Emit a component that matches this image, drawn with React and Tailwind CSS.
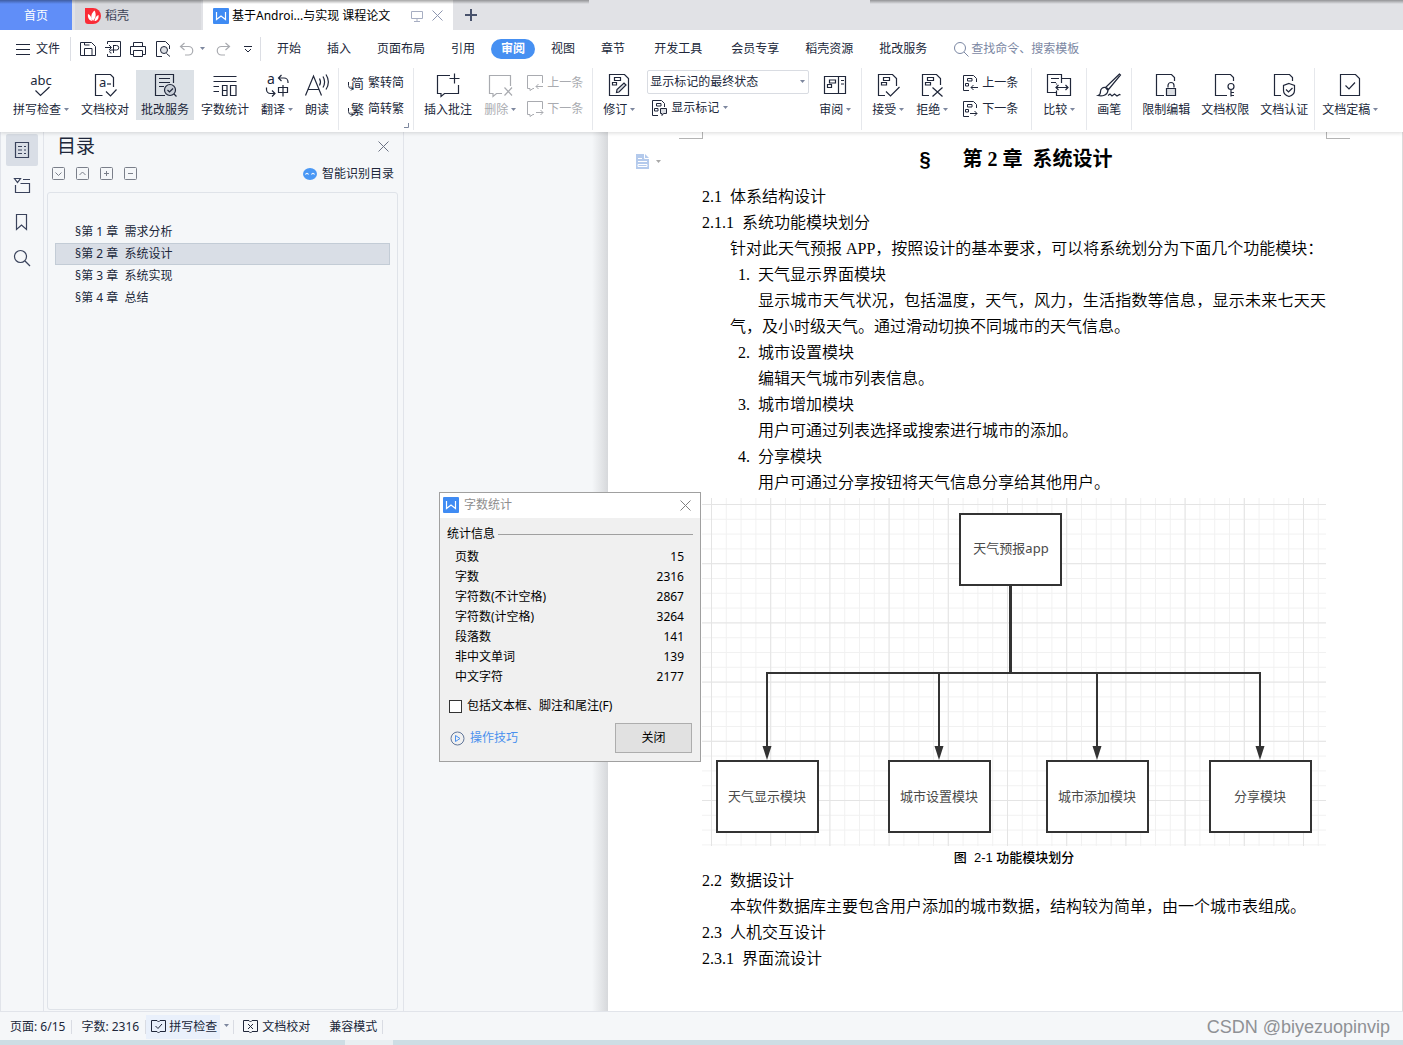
const uiFont = "font-['Noto_Sans','Noto_Sans_CJK_SC',sans-serif]";
const docFont = "font-['Liberation_Serif','Noto_Sans_CJK_SC',serif]";

function Svg({ w = 24, h = 24, children, className = "" }) {
  return (
    <svg
      width={w}
      height={h}
      viewBox={`0 0 ${w} ${h}`}
      fill="none"
      stroke="currentColor"
      aria-hidden="true"
      className={`shrink-0 overflow-visible ${className}`}
    >
      {children}
    </svg>
  );
}

function Caret({ className = "mb-[2px] text-[#7d879e]" }) {
  return (
    <Svg w={5} h={3} className={className}>
      <path d="M0 0h5L2.5 3z" fill="currentColor" stroke="none" />
    </Svg>
  );
}

function WpsLogo() {
  return (
    <Svg w={16} h={16}>
      <rect width="16" height="16" rx="1" fill="#3f8bf3" stroke="none" />
      <path d="M3.5 4v7.5L8 8l4.500 3.500V4" stroke="#fff" strokeWidth="1.2" />
    </Svg>
  );
}

/* Sheet with the two tracked-change marks, shared by the revision icons */
const marks = <path d="M7.5 4.5h6v3h-6zM5.5 9.5h5v2.500h-5z" strokeWidth="1.2" />;

const icons = {
  spell: (
    <Svg>
      <text x="12" y="12" textAnchor="middle" fontSize="13" fill="currentColor" stroke="none">abc</text>
      <path d="M6.5 17.5l5 5 9-8.5" strokeWidth="1.2" />
    </Svg>
  ),
  proof: (
    <Svg>
      <path d="M9.5 22.5h-7v-21h15l3 3v9.5M13 18.5l4.5 4.5 6-6.5" strokeWidth="1.2" />
      <text x="6" y="14" fontSize="13" fill="currentColor" stroke="none">a</text>
      <path d="M14 11h4" strokeWidth="1.2" />
    </Svg>
  ),
  correct: (
    <Svg>
      <path d="M12 22.5H2.5v-21h18V10M6 5.5h11M6 9.5h11M6 13.5h5" strokeWidth="1.2" />
      <circle cx="17" cy="17" r="5.5" fill="#c8ced6" strokeWidth="1.2" />
      <path d="M14.5 17l2 2 3.5-3.5M21 21l2.5 2.5" strokeWidth="1.2" />
    </Svg>
  ),
  count: (
    <Svg>
      <path d="M.5 3.5h23M.5 8.5h23M.5 13.5H6M.5 18.5H6M9.5 12.5H14v10H9.5zM9.5 17.5H14M17.5 12.5H23v10h-5.5z" strokeWidth="1.2" />
    </Svg>
  ),
  translate: (
    <Svg>
      <text x="2" y="11" fontSize="14" fill="currentColor" stroke="none">a</text>
      <path d="M16.5 2l-3 3 3 3M13.5 5H19a4 4 0 0 1 4 4v1M1.5 14.5v2a4 4 0 0 0 4 4h4M7 17.5l3 3-3 3M13.5 14.5h9v5h-9zM18 12v11.5" strokeWidth="1.2" />
    </Svg>
  ),
  read: (
    <Svg>
      <path d="M.5 22.5L8.5 3l8 19.5M3 16.5h11M14.5 5.5a7 7 0 0 1 0 7M18 3.5a11 11 0 0 1 0 11M21 1.5a14 14 0 0 1 0 15" strokeWidth="1.2" />
    </Svg>
  ),
  addNote: (
    <Svg>
      <path d="M14 2.5H1.5v18H5v3l3.5-3h14V12M18.5.5v10M13.5 5.5h10" strokeWidth="1.2" />
    </Svg>
  ),
  delNote: (
    <Svg>
      <path d="M22.5 13V2.5h-21v18H5v3l3.5-3H14M16.5 14.5l7.5 8M24 14.5l-7.5 8" strokeWidth="1.2" />
    </Svg>
  ),
  revise: (
    <Svg>
      <path d="M2.5 1.5h15l4 4v17h-19z" strokeWidth="1.2" />
      <path d="M9.5 19.5l.5-3 7-6.500 2 2-7 7z" fill="#dcdfe4" strokeWidth="1.2" />
      <path d="M7.5 4.5h6v3h-6zM5.5 9.5h4V12h-4z" strokeWidth="1.2" />
    </Svg>
  ),
  pane: (
    <Svg>
      <path d="M1.5 3.5h21v17h-21zM15.5 3.5v17M18 7.5h3M18 11h3" strokeWidth="1.2" />
      <path d="M6.5 7h6v3h-6zM4.5 11.5h4v3h-4z" strokeWidth="1.2" />
    </Svg>
  ),
  accept: (
    <Svg>
      <path d="M9 22.5H2.5v-21h14l4 4V13M10 18.5l4.5 4.5 9-9" strokeWidth="1.2" />
      {marks}
    </Svg>
  ),
  reject: (
    <Svg>
      <path d="M9 22.5H2.5v-21h14l4 4V12M12.5 14.5l10 9M22.5 14.5l-10 9" strokeWidth="1.2" />
      {marks}
    </Svg>
  ),
  compare: (
    <Svg>
      <path d="M14.5 10V1.5H.5v18h9M4 5.5h8M4 9.5h5M14.500 5.5h9v17h-14v-5M9.5 10.500v1M9 14.5h12M11.5 12L9 14.5l2.5 2.5M18.5 12l2.5 2.5-2.5 2.5" strokeWidth="1.2" />
    </Svg>
  ),
  brush: (
    <Svg>
      <path d="M22.5 1L9 14l2.5 2.5L23.500 2zM8.5 14.5c-3-.5-5 1.5-5 4 0 2-1 3.5-2.500 4 4 1 9.500 0 10-5z" strokeWidth="1.2" />
      <path d="M11 22.500l2-1.500 2 2 2.500-2 2.500 2 2.500-1.500 1 .5" strokeWidth="1.2" />
    </Svg>
  ),
  restrict: (
    <Svg>
      <path d="M10 22.5H2.5v-21h15l3 3V8M14 14.5v-2a3 3 0 0 1 6 0v2" strokeWidth="1.2" />
      <path d="M12.5 15.5h9v7h-9z" fill="#dcdfe4" strokeWidth="1.2" />
    </Svg>
  ),
  permission: (
    <Svg>
      <path d="M14 22.5H2.5v-21h15l3 3V8M18 16.5v7M18 19.5h3M18 22.5h3" strokeWidth="1.2" />
      <circle cx="18" cy="13.5" r="3" strokeWidth="1.2" />
    </Svg>
  ),
  certify: (
    <Svg>
      <path d="M9 22.5H2.5v-21h15l3 3V8M17 10.5l5.5 2v5c0 3-2.500 5-5.500 6-3-1-5.500-3-5.500-6v-5zM14 16.5l2.5 2.5 4-4" strokeWidth="1.2" />
    </Svg>
  ),
  finalize: (
    <Svg>
      <path d="M2.5 1.5h15l4 4v17h-19zM7.5 12.5l3.5 3.5 6-6.5" strokeWidth="1.2" />
    </Svg>
  ),
  toSimple: (
    <Svg w={16} h={16}>
      <text x="3" y="13" fontSize="13" fill="currentColor" stroke="none">简</text>
      <path d="M.5 7v3.5a3 3 0 0 0 3 3H5M3 11.5l2 2-2 2" />
    </Svg>
  ),
  toTrad: (
    <Svg w={16} h={16}>
      <text x="3" y="13" fontSize="13" fill="currentColor" stroke="none">繁</text>
      <path d="M.5 7v3.5a3 3 0 0 0 3 3H5M3 11.5l2 2-2 2" />
    </Svg>
  ),
  prevNote: (
    <Svg w={16} h={16}>
      <path d="M15.5 8V.5H.5v13H3v2l3-2h1M16 11.5H9M11.5 9L9 11.5l2.5 2.5" />
    </Svg>
  ),
  nextNote: (
    <Svg w={16} h={16}>
      <path d="M15.5 8V.5H.5v13H3v2l3-2h1M9 11.5h7M13.5 9l2.5 2.5-2.5 2.5" />
    </Svg>
  ),
  showMarks: (
    <Svg w={16} h={16}>
      <path d="M7 15.5H1.5V.5h9l3 3V7M5.5 3.5H10V6H5.5zM3.5 8.5H7V11H3.5z" />
      <path d="M9.5 8.5h6v5h-3l-1.5 2v-2H9.5z" fill="#dcdfe4" />
    </Svg>
  ),
  prevRev: (
    <Svg w={16} h={16}>
      <path d="M7 15.5H1.5V.5h10l3 3V7M5.5 3.5H10V6H5.5zM3.5 8.5h3V11h-3zM16 12.5H9M11.5 10L9 12.5l2.5 2.5" />
    </Svg>
  ),
  nextRev: (
    <Svg w={16} h={16}>
      <path d="M7 15.5H1.5V.5h10l3 3V7M5.5 3.5H10V6H5.5zM3.5 8.5h3V11h-3zM8 12.5h7M12.5 10l2.5 2.5-2.5 2.5" />
    </Svg>
  ),
};

function BigButton({ icon, label, caret, active, disabled }) {
  return (
    <button
      type="button"
      disabled={disabled}
      className={`flex h-[50px] shrink-0 flex-col items-center px-[5px] pt-[3px] ${
        active ? "bg-[#dce1e6]" : ""
      } ${disabled ? "text-[#a9abb0]" : "text-[#20273a]"}`}
    >
      {icons[icon]}
      <span className="mt-1 flex items-center gap-[3px] leading-[18px] whitespace-nowrap">
        {label}
        {caret && <Caret />}
      </span>
    </button>
  );
}

function SmallButton({ icon, label, caret, disabled }) {
  return (
    <button
      type="button"
      disabled={disabled}
      className={`flex h-[26px] shrink-0 items-center gap-1 px-1 whitespace-nowrap ${
        disabled ? "text-[#a9abb0]" : "text-[#20273a]"
      }`}
    >
      {icons[icon]}
      {label}
      {caret && <Caret />}
    </button>
  );
}

function Group({ children, className = "gap-[2px] px-[5px]" }) {
  return (
    <div className={`flex h-[62px] shrink-0 items-start border-r border-[#e6e8ec] pt-[2px] ${className}`}>
      {children}
    </div>
  );
}

function TitleTabs() {
  return (
    <div className="relative flex h-[30px] bg-[#e1e2e6]">
      <button type="button" className="w-[72px] bg-[#608ef8] pt-px text-white">首页</button>
      <button type="button" className="ml-[3px] flex w-[126px] items-center gap-1 bg-[#d8d9dd] pt-px pl-[10px] text-[#3c4256]">
        <Svg w={16} h={16}>
          <path d="M0 0h8a8 8 0 1 1 0 16H3a3 3 0 0 1-3-3z" fill="#fa2c37" stroke="none" />
          <path d="M8 13C5 9 6.500 5 9.500 2.500 11.500 6 11 10 8 13zM7 13C3.500 12 2.500 9 3 6c2.500 1 4 4 4 7zM9.500 13c3 0 4.500-2.500 4-6-2 .5-3.500 3-4 6z" fill="#fff" stroke="none" />
        </Svg>
        稻壳
      </button>
      <div className="ml-[2px] flex w-[250px] items-center bg-white pt-px pl-[10px] text-black">
        <WpsLogo />
        <span className="ml-[3px] grow whitespace-nowrap">基于Androi...与实现 课程论文</span>
        <Svg w={12} h={12} className="mr-[9px] text-[#a7aec2]">
          <path d="M.5 1.5h11v7H.5zM6 8.5V11M3 11.5h6" />
        </Svg>
        <button type="button" aria-label="关闭标签" className="mr-[10px]">
          <Svg w={11} h={11} className="text-[#8d96b0]">
            <path d="M.5.5l10 10M10.5.5l-10 10" />
          </Svg>
        </button>
      </div>
      <button type="button" aria-label="新建" className="ml-3">
        <Svg w={12} h={12} className="text-[#48526c]">
          <path d="M6 0v12M0 6h12" strokeWidth="2" />
        </Svg>
      </button>
      <div className="pointer-events-none absolute inset-x-0 top-0 flex h-1 justify-between">
        <div className="w-[42%] bg-gradient-to-b from-black/35 to-transparent" />
        <div className="w-[38%] bg-gradient-to-b from-black/35 to-transparent" />
      </div>
    </div>
  );
}

const menuLeft = ["开始", "插入", "页面布局", "引用"];
const menuRight = ["视图", "章节", "开发工具", "会员专享", "稻壳资源", "批改服务"];

function MenuBar() {
  return (
    <div className="flex h-[37px] items-center pt-px text-[#20273a]">
      <button type="button" className="ml-4 flex items-center gap-[6px]">
        <Svg w={14} h={11}>
          <path d="M0 .5h14M0 5.5h14M0 10.5h14" />
        </Svg>
        文件
      </button>
      <div className="ml-[10px] h-6 w-px bg-[#dcdee4]" />
      <div className="ml-[9px] flex items-center gap-[9px]">
        <button type="button" aria-label="保存">
          <Svg w={16} h={16}>
            <path d="M.5 1.5h11l4 4v9H.5zM4.5 14.500V7.5H12v7M4.5 1.5V4h5" />
          </Svg>
        </button>
        <button type="button" aria-label="输出为PDF">
          <Svg w={16} h={16}>
            <path d="M2.5 3V.5h13v15h-13V13M0 6.5h6M4 4l2.500 2.5L4 9M8.5 4v8M8.5 4.5h3a2 2 0 0 1 0 4.500h-6a2 2 0 0 0 0 3h1" />
          </Svg>
        </button>
        <button type="button" aria-label="打印">
          <Svg w={16} h={16}>
            <path d="M3.5 5.500v-4h9v4M3 13.5H.5v-8h15v8H13M3.5 9.5h9v6h-9z" />
          </Svg>
        </button>
        <button type="button" aria-label="打印预览">
          <Svg w={16} h={16}>
            <path d="M7 15.5H1.5V.5h9l4 4V8M11.5 12.5l3.500 3" />
            <circle cx="9" cy="9" r="3.5" fill="#dcdfe4" />
          </Svg>
        </button>
      </div>
      <button type="button" aria-label="撤销" className="ml-[9px] flex items-center gap-[6px] text-[#a9abb0]">
        <Svg w={14} h={14}>
          <path d="M4.5 1l-4 3.5 4 3.5M.5 4.5h8a4 4 0 0 1 0 8.500H5" strokeWidth="1.2" />
        </Svg>
        <Caret />
      </button>
      <button type="button" aria-label="恢复" className="ml-[11px] text-[#a9abb0]">
        <Svg w={14} h={14}>
          <path d="M9.5 1l4 3.5-4 3.5M13.5 4.5h-8a4 4 0 0 0 0 8.500H9" strokeWidth="1.2" />
        </Svg>
      </button>
      <button type="button" aria-label="自定义" className="ml-[14px]">
        <Svg w={8} h={7}>
          <path d="M0 .5h8M1 3l3 3 3-3" />
        </Svg>
      </button>
      <div className="ml-2 h-6 w-px bg-[#dcdee4]" />
      <nav className="ml-[3px] flex items-center whitespace-nowrap">
        {menuLeft.map((m) => (
          <button key={m} type="button" className="px-[13px]">{m}</button>
        ))}
        <button type="button" className="mx-[3px] h-5 rounded-full bg-[#4690f2] px-[10px] font-bold text-white">审阅</button>
        {menuRight.map((m) => (
          <button key={m} type="button" className={m === "开发工具" ? "px-4" : "px-[13px]"}>{m}</button>
        ))}
      </nav>
      <label className="ml-[14px] flex items-center gap-[2px] text-[#7b87a3]">
        <Svg w={15} h={15}>
          <circle cx="6" cy="6" r="5.5" />
          <path d="M10 10l4.5 4.5" />
        </Svg>
        <input
          type="text"
          aria-label="查找命令"
          placeholder="查找命令、搜索模板"
          className="w-32 bg-transparent outline-none placeholder:text-[#7b87a3]"
        />
      </label>
    </div>
  );
}

function Ribbon() {
  return (
    <div className="flex h-[65px] overflow-hidden pt-px pl-[3px]">
      <Group className="gap-[2px] pr-1 pl-[5px]">
        <BigButton icon="spell" label="拼写检查" caret />
        <BigButton icon="proof" label="文档校对" />
        <BigButton icon="correct" label="批改服务" active />
        <BigButton icon="count" label="字数统计" />
        <BigButton icon="translate" label="翻译" caret />
        <BigButton icon="read" label="朗读" />
      </Group>
      <Group className="relative px-[5px]">
        <div>
          <SmallButton icon="toSimple" label="繁转简" />
          <SmallButton icon="toTrad" label="简转繁" />
        </div>
        <Svg w={5} h={5} className="absolute right-1 bottom-[2px] text-[#7d879e]">
          <path d="M4.5 0v4.500H0" />
        </Svg>
      </Group>
      <Group>
        <BigButton icon="addNote" label="插入批注" />
        <BigButton icon="delNote" label="删除" caret disabled />
        <div>
          <SmallButton icon="prevNote" label="上一条" disabled />
          <SmallButton icon="nextNote" label="下一条" disabled />
        </div>
      </Group>
      <Group>
        <BigButton icon="revise" label="修订" caret />
        <div className="mr-[3px] ml-[5px] w-[162px]">
          <div className="relative">
            <select
              aria-label="显示状态"
              className="h-6 w-full appearance-none rounded-[2px] border border-[#d9dce2] bg-white pl-[2px] text-[#20273a]"
            >
              <option>显示标记的最终状态</option>
            </select>
            <div className="pointer-events-none absolute inset-y-0 right-1 flex items-center">
              <Caret />
            </div>
          </div>
          <div className="pt-px">
            <SmallButton icon="showMarks" label="显示标记" caret />
          </div>
        </div>
        <BigButton icon="pane" label="审阅" caret />
      </Group>
      <Group className="gap-[2px] pr-[6px] pl-[5px]">
        <BigButton icon="accept" label="接受" caret />
        <BigButton icon="reject" label="拒绝" caret />
        <div className="mx-[3px]">
          <SmallButton icon="prevRev" label="上一条" />
          <SmallButton icon="nextRev" label="下一条" />
        </div>
      </Group>
      <Group className="px-[6px]">
        <BigButton icon="compare" label="比较" caret />
      </Group>
      <Group>
        <BigButton icon="brush" label="画笔" />
      </Group>
      <Group className="gap-px pr-px pl-[5px]">
        <BigButton icon="restrict" label="限制编辑" />
        <BigButton icon="permission" label="文档权限" />
        <BigButton icon="certify" label="文档认证" />
      </Group>
      <div className="pt-[2px] pl-[2px]">
        <BigButton icon="finalize" label="文档定稿" caret />
      </div>
    </div>
  );
}

function IconRail() {
  const button = "flex size-8 items-center justify-center rounded-[2px]";
  return (
    <div className="flex w-[44px] shrink-0 flex-col gap-1 border-x border-[#e1e4ea] pt-[2px] pl-[5px] text-[#3a435c]">
      <button type="button" aria-label="目录" className={`${button} bg-[#d9dee6]`}>
        <Svg w={16} h={18}>
          <path d="M1.5 1.5h13v15h-13zM4 5.5h4M10 5.5h2M4 9h4M10 9h2M4 12.5h4M10 12.5h2" strokeWidth="1.2" />
        </Svg>
      </button>
      <button type="button" aria-label="章节" className={button}>
        <Svg w={16} h={16}>
          <path d="M.5.5h6l-3 4zM9 1.5h7M1.5 7v7.5h14v-9h-9" strokeWidth="1.2" />
        </Svg>
      </button>
      <button type="button" aria-label="书签" className={button}>
        <Svg w={12} h={18}>
          <path d="M.5 1.5h10v15l-5-4.500-5 4.500z" strokeWidth="1.2" />
        </Svg>
      </button>
      <button type="button" aria-label="查找" className={button}>
        <Svg w={16} h={16}>
          <circle cx="6.5" cy="6.5" r="6" strokeWidth="1.2" />
          <path d="M11 11l5 5" strokeWidth="1.2" />
        </Svg>
      </button>
    </div>
  );
}

const outline = ["§第 1 章  需求分析", "§第 2 章  系统设计", "§第 3 章  系统实现", "§第 4 章  总结"];
const outlineTools = [
  { label: "展开", d: "M3.500 5.500l3 3 3-3" },
  { label: "收起", d: "M3.500 8l3-3 3 3" },
  { label: "增加级别", d: "M6.5 4v5M4 6.5h5" },
  { label: "减少级别", d: "M4 6.5h5" },
];

function OutlinePanel() {
  return (
    <aside className="flex w-[360px] shrink-0 flex-col border-r border-[#e1e4ea] text-[#20273a]">
      <div className="flex h-[29px] items-center justify-between pr-[14px] pl-[13px]">
        <h2 className="text-[19px]">目录</h2>
        <button type="button" aria-label="关闭目录">
          <Svg w={11} h={11} className="text-[#6b7284]">
            <path d="M.5.5l10 10M10.5.5l-10 10" />
          </Svg>
        </button>
      </div>
      <div className="flex h-[25px] items-center gap-[11px] pr-[9px] pl-2">
        {outlineTools.map((t) => (
          <button key={t.label} type="button" aria-label={t.label}>
            <Svg w={13} h={13} className="text-[#7a7f8a]">
              <rect x=".5" y=".5" width="12" height="12" rx="1" />
              <path d={t.d} />
            </Svg>
          </button>
        ))}
        <button type="button" className="ml-auto flex items-center gap-[5px] pt-px">
          <Svg w={14} h={14}>
            <ellipse cx="7" cy="7" rx="7" ry="6" fill="#4a98f5" stroke="none" />
            <path d="M2.5 7.5q1.500-2.500 3 0M8.5 7.5q1.500-2.500 3 0" stroke="#fff" strokeWidth="1.2" />
          </Svg>
          智能识别目录
        </button>
      </div>
      <ul className="mt-[6px] mr-[5px] mb-px ml-[3px] grow rounded-[3px] border border-[#dfe3e9] px-[7px] pt-7">
        {outline.map((item, i) => (
          <li key={item}>
            <a
              href="#outline"
              className={`block border pl-[19px] leading-5 whitespace-pre ${
                i === 1 ? "border-[#c3ccd6] bg-[#d9dee6]" : "border-transparent"
              }`}
            >
              {item}
            </a>
          </li>
        ))}
      </ul>
    </aside>
  );
}

const modules = [
  { x: 65, label: "天气显示模块" },
  { x: 237, label: "城市设置模块" },
  { x: 395, label: "城市添加模块" },
  { x: 558, label: "分享模块" },
];

function ModuleDiagram() {
  return (
    <svg viewBox="0 0 624 348" role="img" aria-label="功能模块划分" className={`mt-[2px] block w-full font-normal ${uiFont}`}>
      <defs>
        <pattern id="minor" x="9" y="6" width="14.8" height="14.8" patternUnits="userSpaceOnUse">
          <path d="M0 .5h14.8M.5 0v14.8" stroke="#f1f1f1" fill="none" />
        </pattern>
        <pattern id="major" x="9" y="6" width="59.2" height="59.2" patternUnits="userSpaceOnUse">
          <path d="M0 .5h59.2M.5 0v59.2" stroke="#e4e4e4" fill="none" />
        </pattern>
      </defs>
      <rect width="624" height="348" fill="url(#minor)" />
      <rect width="624" height="348" fill="url(#major)" />
      <g fill="none" stroke="#333" strokeWidth="2">
        <path d="M308.5 87v88" strokeWidth="3" />
        <path d="M65 250V175h493v75M237 175v75M395 175v75" />
      </g>
      <g textAnchor="middle" fontSize="13" fill="#4a4a4a">
        <rect x="258" y="16" width="101" height="71" fill="#fff" stroke="#333" strokeWidth="2" />
        <text x="309" y="55">天气预报app</text>
        {modules.map((m) => (
          <g key={m.label}>
            <path d={`M${m.x - 4.5} 248h9l-4.5 14z`} fill="#333" />
            <rect x={m.x - 50} y="263" width="101" height="71" fill="#fff" stroke="#333" strokeWidth="2" />
            <text x={m.x} y="303">{m.label}</text>
          </g>
        ))}
      </g>
    </svg>
  );
}

function Line({ children, className = "" }) {
  return <p className={`whitespace-pre ${className}`}>{children}</p>;
}

function DocumentPage() {
  return (
    <article className={`relative grow border-r border-[#dcdcdc] bg-white pr-[76px] pl-[94px] text-[16px] leading-[26px] font-[350] text-black ${docFont}`}>
      <div className="absolute top-0 left-[71px] h-[7px] w-6 border-r border-b border-[#b4b4b4]" />
      <div className="absolute top-0 right-[52px] h-[7px] w-6 border-b border-l border-[#b4b4b4]" />
      <button type="button" aria-label="段落布局" className="absolute top-[22px] left-7 flex items-center gap-[7px]">
        <Svg w={13} h={15}>
          <path d="M0 0h9l4 4v11H0z" fill="#b4caec" stroke="none" />
          <path d="M2 4.5h4M2 7.5h9M2 10.5h9v2H2zM8.5 0v4.500H13" stroke="#fff" />
        </Svg>
        <Caret className="text-[#a8a8a8]" />
      </button>
      <h1 className="flex h-[52px] items-center justify-center gap-8 pt-[2px] pl-1 text-[20px] font-bold">
        <span className="font-['Liberation_Sans',sans-serif]">§</span>
        <span className="whitespace-pre">第 2 章  系统设计</span>
      </h1>
      <Line>2.1  体系结构设计</Line>
      <Line>2.1.1  系统功能模块划分</Line>
      <p className="-mr-4 pl-7">针对此天气预报 APP，按照设计的基本要求，可以将系统划分为下面几个功能模块：</p>
      <Line className="pl-9">1.  天气显示界面模块</Line>
      <p className="pl-7 indent-7 text-justify">
        显示城市天气状况，包括温度，天气，风力，生活指数等信息，显示未来七天天气，及小时级天气。通过滑动切换不同城市的天气信息。
      </p>
      <Line className="pl-9">2.  城市设置模块</Line>
      <Line className="pl-14">编辑天气城市列表信息。</Line>
      <Line className="pl-9">3.  城市增加模块</Line>
      <Line className="pl-14">用户可通过列表选择或搜索进行城市的添加。</Line>
      <Line className="pl-9">4.  分享模块</Line>
      <Line className="pl-14">用户可通过分享按钮将天气信息分享给其他用户。</Line>
      <ModuleDiagram />
      <p className="pt-px text-center font-['Liberation_Sans','Noto_Sans_CJK_SC',sans-serif] text-[13px] leading-[21px] font-medium whitespace-pre">
        图  2-1 功能模块划分
      </p>
      <Line>2.2  数据设计</Line>
      <Line className="pl-7">本软件数据库主要包含用户添加的城市数据，结构较为简单，由一个城市表组成。</Line>
      <Line>2.3  人机交互设计</Line>
      <Line>2.3.1  界面流设计</Line>
    </article>
  );
}

const stats = [
  ["页数", 15],
  ["字数", 2316],
  ["字符数(不计空格)", 2867],
  ["字符数(计空格)", 3264],
  ["段落数", 141],
  ["非中文单词", 139],
  ["中文字符", 2177],
];

function WordCountDialog() {
  return (
    <div
      role="dialog"
      aria-label="字数统计"
      className="absolute top-[492px] left-[439px] z-20 w-[262px] border border-[#a0a0a0] bg-[#f0f0f0] text-black"
    >
      <div className="flex h-[25px] items-center bg-white pr-[9px] pb-px pl-[3px] text-[#8e8e8e]">
        <WpsLogo />
        <span className="ml-[5px] grow">字数统计</span>
        <button type="button" aria-label="关闭窗口">
          <Svg w={11} h={11} className="text-[#808080]">
            <path d="M.5.5l10 10M10.5.5l-10 10" />
          </Svg>
        </button>
      </div>
      <div className="flex items-center gap-[3px] pt-[6px] pr-[7px] pl-[7px] leading-5">
        统计信息
        <div className="h-px grow bg-[#a0a0a0]" />
      </div>
      <table className="mt-[3px] w-full leading-5">
        <tbody>
          {stats.map(([name, value]) => (
            <tr key={name}>
              <th scope="row" className="p-0 pl-[15px] text-left font-normal">{name}</th>
              <td className="p-0 pr-4 text-right">{value}</td>
            </tr>
          ))}
        </tbody>
      </table>
      <label className="mt-[9px] flex h-5 items-center gap-[5px] pl-[9px]">
        <input type="checkbox" className="size-[13px] appearance-none border border-[#333] bg-white" />
        包括文本框、脚注和尾注(F)
      </label>
      <div className="mt-[7px] mb-2 flex items-center justify-between pr-2 pl-[10px]">
        <a href="#tips" className="flex items-center gap-[5px] text-[#4a90ee]">
          <Svg w={15} h={15}>
            <circle cx="7.5" cy="7.5" r="6.5" stroke="#62779a" />
            <path d="M5.5 4.5v6l4.500-3z" />
          </Svg>
          操作技巧
        </a>
        <button type="button" className="h-[30px] w-[77px] border border-[#adadad] bg-[#e1e1e1]">关闭</button>
      </div>
    </div>
  );
}

function StatusBar() {
  const divider = <div className="h-[14px] w-px bg-[#d9dce3]" />;
  return (
    <footer className="flex h-[29px] shrink-0 items-center border-t border-[#e1e4ea] pt-px pl-[10px] whitespace-nowrap text-[#20273a]">
      <span className="pr-[6px]">页面: 6/15</span>
      {divider}
      <span className="pr-[6px] pl-[9px]">字数: 2316</span>
      {divider}
      <button type="button" className="flex h-6 items-center gap-[3px] bg-[#e9f0fb] pr-[3px] pl-[5px]">
        <Svg w={15} h={15}>
          <path d="M6 1.5H.5v11H6L7.5 14 9 12.5h5.5v-11H9L7.5 3zM4.500 7l2.500 2.500L11 5" />
        </Svg>
        拼写检查
      </button>
      <button type="button" aria-label="拼写检查选项" className="px-[4px]">
        <Caret />
      </button>
      {divider}
      <button type="button" className="flex items-center gap-1 pr-[10px] pl-[9px]">
        <Svg w={15} h={15}>
          <path d="M6 1.5H.5v11H6L7.5 14 9 12.5h5.5v-11H9L7.5 3zM5 5l5 5M10 5l-5 5" />
        </Svg>
        文档校对
      </button>
      <span className="pr-[5px] pl-[9px]">兼容模式</span>
      {divider}
      <span className="ml-auto pr-[13px] font-['Liberation_Sans',sans-serif] text-[18px] leading-6 text-[#8f9195]">
        CSDN @biyezuopinvip
      </span>
    </footer>
  );
}

export default function App() {
  return (
    <div className={`relative flex min-h-screen flex-col bg-[#f5f7f9] text-[12px] ${uiFont}`}>
      <header className="relative z-10 bg-white shadow-[0_1px_4px_rgba(0,0,0,0.15)]">
        <TitleTabs />
        <MenuBar />
        <Ribbon />
      </header>
      <main className="flex grow">
        <IconRail />
        <OutlinePanel />
        <div className="flex w-[204px] shrink-0 justify-end">
          <div className="w-4 bg-gradient-to-r from-transparent to-[#d6d8db]" />
        </div>
        <DocumentPage />
      </main>
      <StatusBar />
      <div className="h-[5px] shrink-0 bg-[#cddde4]">
        <div className="ml-[345px] h-full w-12 bg-[#e9eff2]" />
      </div>
      <WordCountDialog />
    </div>
  );
}
